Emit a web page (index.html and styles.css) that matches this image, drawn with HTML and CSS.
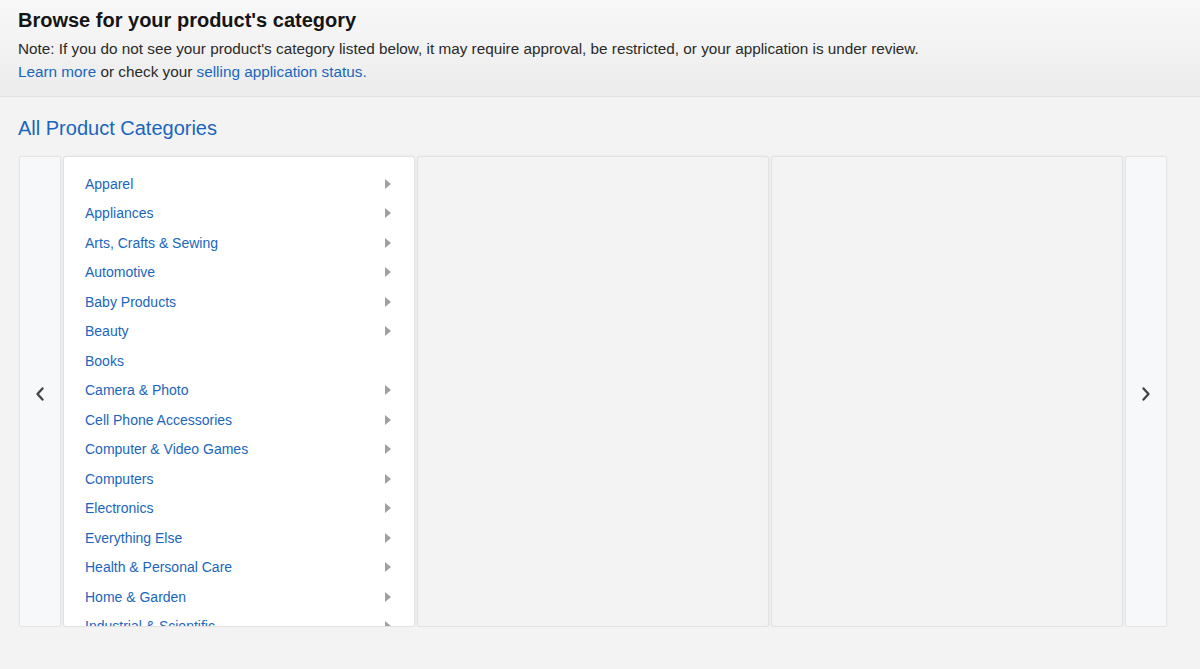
FILE: index.html
```html
<!DOCTYPE html>
<html lang="en">
<head>
    <meta charset="UTF-8">
    <meta name="viewport" content="width=device-width, initial-scale=1.0">
    <title>Browse for your product's category</title>
    <link rel="stylesheet" href="styles.css">
</head>
<body>
    <div class="header">
        <h1>Browse for your product's category</h1>
        <p>Note: If you do not see your product's category listed below, it may require approval, be restricted, or your application is under review.</p>
        <p><a href="#">Learn more</a> or check your <a href="#">selling application status.</a></p>
    </div>

    <h2 class="heading"><a href="#">All Product Categories</a></h2>

    <div class="carousel">
        <button class="nav">
            <svg width="12" height="16" viewBox="0 0 12 16"><path d="M8.5 2.5 L3.5 8 L8.5 13.5" fill="none" stroke="#444" stroke-width="2.4" stroke-linecap="round" stroke-linejoin="round"/></svg>
        </button>
        <div class="col first">
            <ul class="list">
                <li><a href="#">Apparel</a><span class="arrow"></span></li>
                <li><a href="#">Appliances</a><span class="arrow"></span></li>
                <li><a href="#">Arts, Crafts &amp; Sewing</a><span class="arrow"></span></li>
                <li><a href="#">Automotive</a><span class="arrow"></span></li>
                <li><a href="#">Baby Products</a><span class="arrow"></span></li>
                <li><a href="#">Beauty</a><span class="arrow"></span></li>
                <li><a href="#">Books</a></li>
                <li><a href="#">Camera &amp; Photo</a><span class="arrow"></span></li>
                <li><a href="#">Cell Phone Accessories</a><span class="arrow"></span></li>
                <li><a href="#">Computer &amp; Video Games</a><span class="arrow"></span></li>
                <li><a href="#">Computers</a><span class="arrow"></span></li>
                <li><a href="#">Electronics</a><span class="arrow"></span></li>
                <li><a href="#">Everything Else</a><span class="arrow"></span></li>
                <li><a href="#">Health &amp; Personal Care</a><span class="arrow"></span></li>
                <li><a href="#">Home &amp; Garden</a><span class="arrow"></span></li>
                <li><a href="#">Industrial &amp; Scientific</a><span class="arrow"></span></li>
            </ul>
        </div>
        <div class="col"></div>
        <div class="col"></div>
        <button class="nav">
            <svg width="12" height="16" viewBox="0 0 12 16"><path d="M3.5 2.5 L8.5 8 L3.5 13.5" fill="none" stroke="#444" stroke-width="2.4" stroke-linecap="round" stroke-linejoin="round"/></svg>
        </button>
    </div>
</body>
</html>
```

FILE: styles.css
```css
*{
    margin: 0;
    padding: 0;
    box-sizing: border-box;
}
body{
    background-color: #f3f3f3;
    font-family: "Liberation Sans", Arial, Helvetica, sans-serif;
    color: #333;
}
a{
    color: #1a66bd;
    text-decoration: none;
}
.header{
    padding: 9px 18px 13px;
    background: linear-gradient(#f8f8f8, #ececec);
    border-bottom: 1px solid #e0e0e0;
}
.header h1{
    font-size: 20px;
    line-height: 22px;
    color: #151515;
    margin-bottom: 6px;
}
.header p{
    font-size: 15.3px;
    line-height: 23px;
    color: #2a2a2a;
}
.heading{
    font-size: 20px;
    font-weight: normal;
    line-height: 24px;
    margin: 19px 18px 16px;
}
.carousel{
    display: flex;
    gap: 2px;
    height: 471px;
    margin: 0 33px 0 19px;
}
.nav{
    width: 42px;
    flex-shrink: 0;
    display: flex;
    align-items: center;
    justify-content: center;
    padding-top: 4px;
    background-color: #f6f8fa;
    border: 1px solid #e4e4e4;
    border-radius: 2px;
    box-shadow: 0 0 2px rgba(0,0,0,0.06);
}
.col{
    flex: 1;
    background-color: #f3f3f3;
    border: 1px solid #e2e2e2;
    border-radius: 3px;
    box-shadow: 0 0 2px rgba(0,0,0,0.08);
    overflow: hidden;
}
.col.first{
    background-color: #fff;
}
.list{
    list-style: none;
    padding: 12px 23px 0 21px;
}
.list li{
    display: flex;
    align-items: center;
    justify-content: space-between;
    height: 29.5px;
    font-size: 14px;
}
.arrow{
    width: 0;
    height: 0;
    border-top: 5px solid transparent;
    border-bottom: 5px solid transparent;
    border-left: 6px solid #a0a0a0;
}
```
